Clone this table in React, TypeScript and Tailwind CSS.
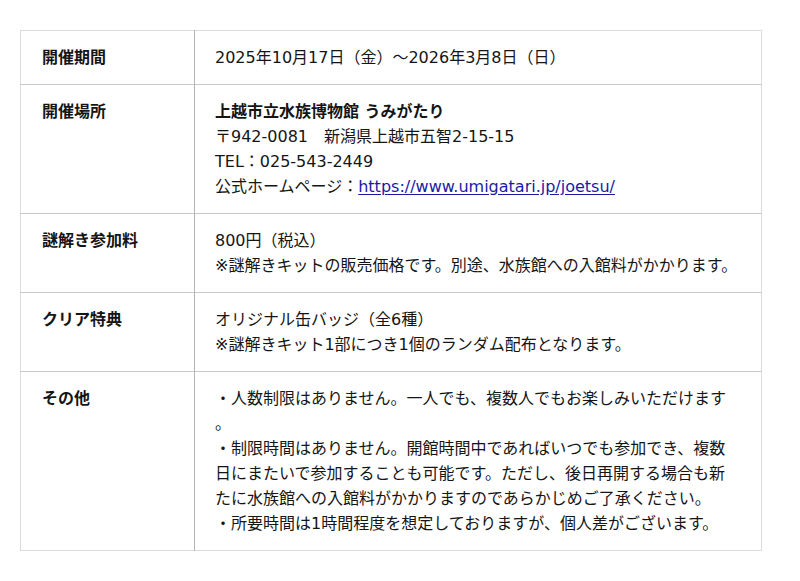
const rows: { label: string; lines: React.ReactNode[] }[] = [
  { label: '開催期間', lines: ['2025年10月17日（金）～2026年3月8日（日）'] },
  {
    label: '開催場所',
    lines: [
      <span className="font-bold">上越市立水族博物館 うみがたり</span>,
      '〒942-0081　新潟県上越市五智2-15-15',
      'TEL：025-543-2449',
      <>
        公式ホームページ：
        <a href="#" className="text-[#1a1aa8] underline underline-offset-2">
          https://www.umigatari.jp/joetsu/
        </a>
      </>,
    ],
  },
  {
    label: '謎解き参加料',
    lines: ['800円（税込）', '※謎解きキットの販売価格です。別途、水族館への入館料がかかります。'],
  },
  {
    label: 'クリア特典',
    lines: ['オリジナル缶バッジ（全6種）', '※謎解きキット1部につき1個のランダム配布となります。'],
  },
  {
    label: 'その他',
    lines: [
      '・人数制限はありません。一人でも、複数人でもお楽しみいただけます',
      '。',
      '・制限時間はありません。開館時間中であればいつでも参加でき、複数',
      '日にまたいで参加することも可能です。ただし、後日再開する場合も新',
      'たに水族館への入館料がかかりますのであらかじめご了承ください。',
      '・所要時間は1時間程度を想定しておりますが、個人差がございます。',
    ],
  },
];

export default function App() {
  return (
    <div className="min-h-screen bg-white px-5 pt-[30px] text-[16px] leading-[25px] text-[#151515] font-['DejaVu_Sans','Noto_Sans_CJK_JP',sans-serif]">
      <table className="w-[742px] border-collapse border border-[#dcdcdc]">
        <tbody>
          {rows.map((r) => (
            <tr key={r.label} className="border-b border-[#c8c8c8] last:border-[#dcdcdc]">
              <th className="w-[174px] border-r border-[#b4b4b4] pl-[21px] pr-2 pt-[14px] pb-[14px] text-left align-top font-bold">
                {r.label}
              </th>
              <td className="pl-5 pr-4 pt-[14px] pb-[14px] align-top">
                {r.lines.map((l, i) => (
                  <div key={i} className="whitespace-nowrap">
                    {l}
                  </div>
                ))}
              </td>
            </tr>
          ))}
        </tbody>
      </table>
    </div>
  );
}
